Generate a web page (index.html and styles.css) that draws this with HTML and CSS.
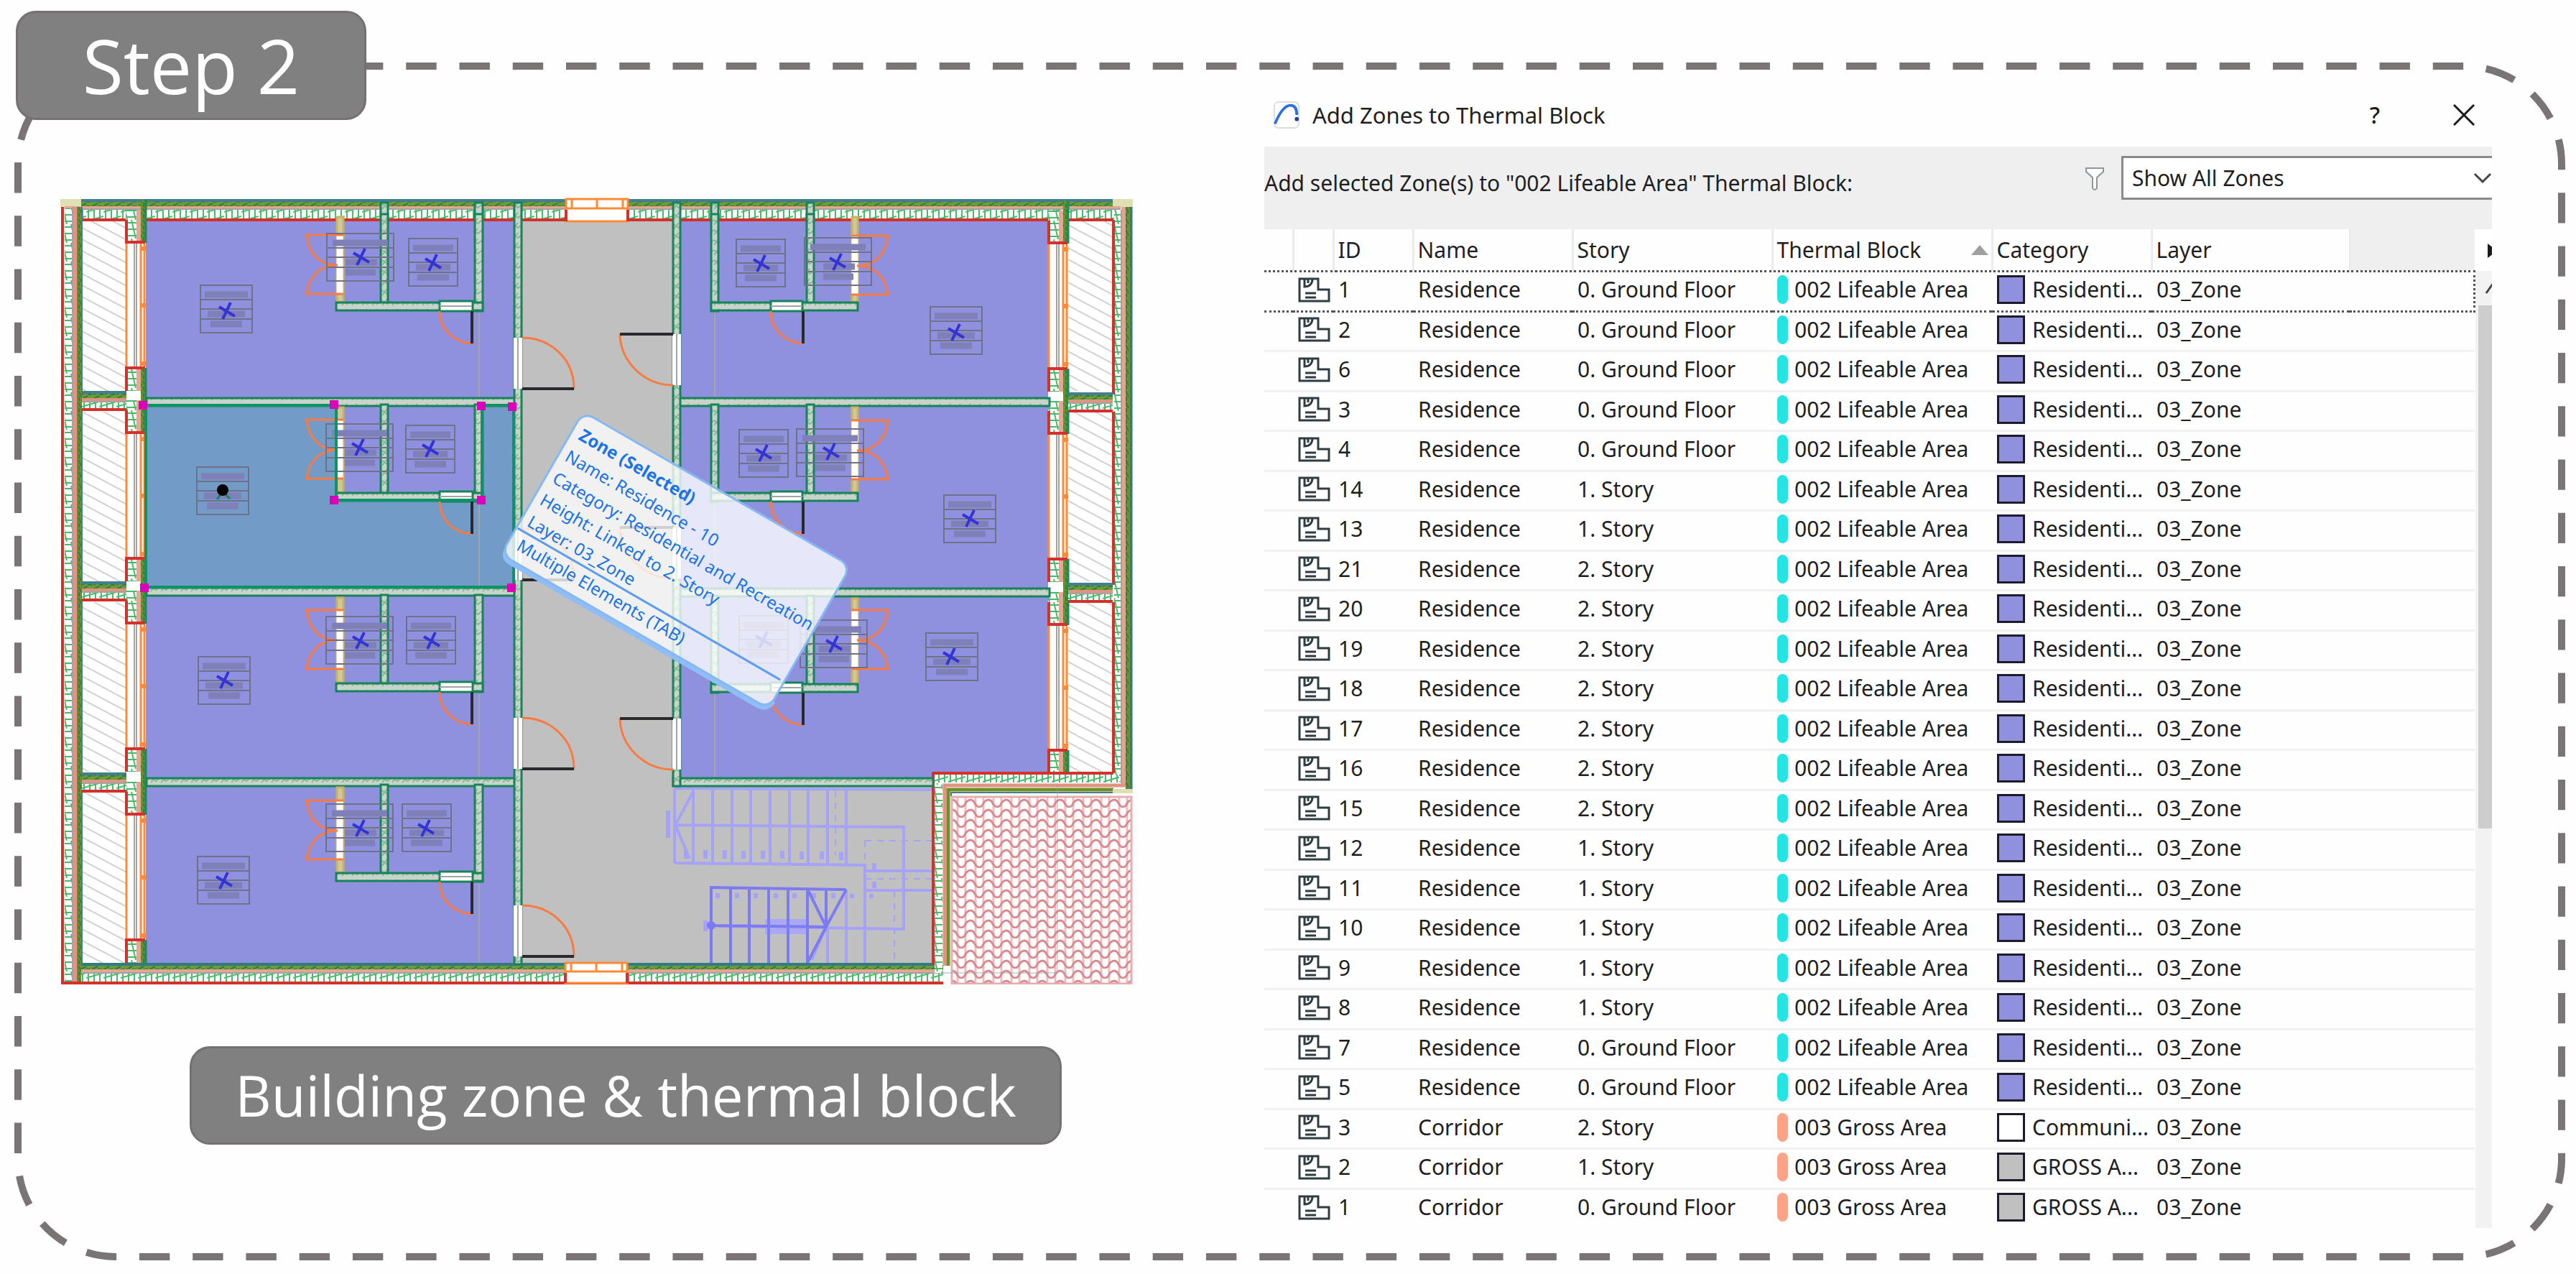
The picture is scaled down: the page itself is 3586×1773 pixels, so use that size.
FILE: index.html
```html
<!DOCTYPE html>
<html lang="en">
<head>
<meta charset="utf-8">
<title>Step 2 - Building zone &amp; thermal block</title>
<link rel="stylesheet" href="styles.css">
</head>
<body>
<svg class="sprites" aria-hidden="true">
  <symbol id="zone-icon" viewBox="0 0 45 35">
    <path d="M2 2H28V17H43V33H2Z M9 2V13C16 13 20 9 20 2 M14 3V8 M10 22H25 M10 28H25" fill="none" stroke="#2f3d42" stroke-width="3"/>
  </symbol>
</svg>
<main class="step">
  <svg class="frame" aria-hidden="true"><rect class="frame-line" rx="136" ry="136"/></svg>
  <h1 class="badge">Step 2</h1>

  <section class="plan-side">
    <svg class="plan" viewBox="84 274 1493 1096" role="img" aria-label="Floor plan with building zones">
      <defs>
        <pattern id="insH" width="24" height="13" patternUnits="userSpaceOnUse"><rect width="24" height="13" fill="#fff"/><path d="M0 9L24 2M3 0V13M11 0V13M19 0V13" stroke="#45bd68" stroke-width="2" fill="none"/></pattern>
        <pattern id="insV" width="12" height="26" patternUnits="userSpaceOnUse"><rect width="12" height="26" fill="#fff"/><path d="M3 0L9 26M0 4H12M0 13H12M0 22H12" stroke="#45bd68" stroke-width="2" fill="none"/></pattern>
        <pattern id="oliveH" width="16" height="6" patternUnits="userSpaceOnUse"><rect width="16" height="6" fill="#6f9a35"/><path d="M0 5L8 1M8 5H14" stroke="#2e7f45" stroke-width="2"/></pattern>
        <pattern id="oliveV" width="6" height="16" patternUnits="userSpaceOnUse"><rect width="6" height="16" fill="#6f8f2d"/><path d="M1 0L5 8M2 8V14" stroke="#2e7f45" stroke-width="2"/></pattern>
        <pattern id="gyp" width="14" height="14" patternUnits="userSpaceOnUse"><rect width="14" height="14" fill="#c9d3c9"/><path d="M0 4L7 9L14 4M0 11L7 2" stroke="#86b896" stroke-width="2" fill="none"/></pattern>
        <pattern id="deck" width="60" height="16" patternUnits="userSpaceOnUse"><rect width="60" height="16" fill="#fff"/><path d="M0 -16L60 16M0 0L60 32M0 -32L60 0" stroke="#d2d2d2" stroke-width="2"/></pattern>
        <pattern id="tiles" x="1326" y="1110" width="25" height="14" patternUnits="userSpaceOnUse"><rect width="25" height="14" fill="#fff"/><path d="M7 0V14M18 0V14" stroke="#eebcbf" stroke-width="3"/><path d="M-1 3Q4 3 6 8Q9 13 12 13Q16 13 18 8Q21 3 26 3" fill="none" stroke="#d98a8f" stroke-width="3"/></pattern>

        <g id="stamp"><path d="M0 0H68V66H0ZM0 20H68M0 33H68M0 47H68"/><path class="smudge" d="M6 13H62M10 40H58M12 54H56"/></g>
        <g id="stamp-main"><path d="M0 0H72V66H0ZM0 20H72M0 33H72M0 47H72"/><path class="smudge" d="M6 13H66M10 40H62M14 54H58"/></g>
        <g id="stamp-wide"><path d="M0 0H93V66H0ZM0 20H93M0 33H93M0 47H93"/><path class="smudge" d="M8 13H85M26 40H70M26 54H68"/></g>
        <path id="x" d="M-11 -6L11 7M5 -12L-6 11"/>

        <g id="opening">
          <rect x="175" y="-14" width="28" height="46" fill="url(#insV)"/>
          <rect x="190" y="-14" width="6" height="46" fill="#e8a39a"/>
          <rect x="196" y="-28" width="7" height="60" fill="url(#oliveV)"/><path class="green" d="M203 -28V32"/>
          <path class="red" d="M176 0V31H202"/>
          <rect x="175" y="33" width="28" height="172" fill="#fff"/>
          <path class="steel" d="M187 33V205M190 33V205"/>
          <path d="M176 33V205M196 33V205M201 33V205" class="amber"/><path d="M195 119H203M195 40H203M195 200H203" class="amber thick"/>
          <rect x="175" y="206" width="28" height="32" fill="url(#insV)"/>
          <rect x="190" y="206" width="6" height="32" fill="#e8a39a"/>
          <rect x="196" y="206" width="7" height="32" fill="url(#oliveV)"/><path class="green" d="M203 206V238"/>
          <path class="red" d="M176 238V206H202"/>
        </g>
        <g id="slab">
          <rect width="62" height="4" fill="#447f8c"/><rect y="4" width="62" height="6" fill="url(#oliveH)"/>
          <rect y="10" width="62" height="5" fill="#e0937f"/><rect y="15" width="62" height="10" fill="url(#insH)"/><path class="red" d="M0 26H62"/><path class="steel" d="M0 15H62"/>
        </g>
        <g id="closet-doors"><path class="swing" d="M478 0H427C429 22 442 42 470 42C442 42 429 62 427 82H478"/></g>
        <g id="bath">
          <rect class="inner" x="469" y="14" width="9" height="118" fill="#cbc9a4" stroke="#cdb25c"/>
          <rect class="inner" x="530" y="10" width="10" height="124"/>
          <rect class="inner" x="661" y="10" width="11" height="135"/>
          <rect class="inner" x="468" y="133" width="204" height="11"/>
          <rect x="612" y="131" width="46" height="14" fill="#fff"/><path class="steel" d="M612 138H657"/>
          <path class="swing" d="M612 145C612 170 632 189 657 190"/><path class="leaf" d="M657 145V190"/>
        </g>
        <g id="bath-right">
          <rect class="inner" x="1186" y="14" width="8" height="118" fill="#cbc9a4" stroke="#cdb25c"/>
          <rect class="inner" x="1123" y="10" width="10" height="124"/>
          <rect class="inner" x="990" y="10" width="10" height="135"/>
          <rect class="inner" x="990" y="133" width="204" height="11"/>
          <rect x="1073" y="131" width="44" height="14" fill="#fff"/><path class="steel" d="M1073 138H1117"/>
          <path class="swing" d="M1073 145C1073 170 1093 189 1118 190"/><path class="leaf" d="M1118 145V190"/>
        </g>
        <g id="entry-left"><rect x="715" width="12" height="71" fill="#fff"/><path class="steel" d="M721 0V71"/><path class="swing" d="M727 0C765 0 799 28 799 71"/><path class="leaf" d="M727 71H799"/></g>
        <g id="entry-right"><rect x="936" width="12" height="71" fill="#fff"/><path class="steel" d="M942 0V71"/><path class="swing" d="M863 0C863 36 895 71 937 71"/><path class="leaf" d="M863 0H937"/></g>
      </defs>

      <!-- roof -->
      <rect x="1324" y="1109" width="252" height="261" fill="url(#tiles)"/><path d="M1325 1109H1575V1369H1325Z" fill="none" stroke="#e5aeb1" stroke-width="3"/>

      <!-- zones -->
      <path d="M203 308H716V1340H203ZM948 308H1459V1083H948Z" fill="#8f91de"/>
      <path d="M726 308H937V1083H1298V1340H726Z" fill="#c0c0c0"/>
      <path d="M203 565H470V685H661V565H716V817H203Z" fill="#729bc7"/>
      <path class="steel" d="M667 308V1340M995 308V1090"/>

      <!-- stair -->
      <g class="stair-light">
        <path d="M939 1097V1201M965 1097V1202M992 1097V1202M1019 1097V1202M1045 1097V1202M1072 1097V1202M1099 1097V1202M1125 1097V1203M1152 1097V1203M1178 1097V1203M939 1097L1298 1099M939 1148L1258 1151V1293L1000 1289M939 1201L1204 1204V1340M1204 1212H1298M1204 1239H1298M1178 1238V1340M1152 1290V1340M1130 1336L1150 1290M966 1100L940 1148L960 1195"/>
        <path class="thin" d="M1163 1100V1190M1204 1170H1298M1204 1223H1298M1245 1240V1340M1204 1170V1204"/>
        <path class="ghost" d="M930 1128V1166M955 1183V1195M982 1183V1195M1009 1183V1195M1035 1184V1195M1062 1184V1195M1089 1184V1195M1116 1185V1196M1144 1185V1196M1171 1186V1197M1217 1201V1210M1217 1227V1236M982 1281V1296M999 1243V1250M1026 1243V1250M1052 1243V1250M1080 1243V1250M1106 1243V1250M1133 1243V1250M1160 1243V1250M1186 1244V1250M1213 1244V1250"/>
        <rect x="1065" y="1279" width="60" height="21" fill="#aaa8f4" stroke="none"/>
      </g>
      <path class="stair" d="M1178 1238L990 1235V1340M1017 1236V1340M1043 1236V1340M1070 1236V1340M1097 1236V1340M1124 1237V1340M990 1288L1150 1290M1124 1237L1150 1290L1178 1238M1150 1237V1290L1124 1340"/><circle class="stair" cx="990" cy="1288" r="4"/>

      <!-- outer walls -->
      <rect x="84" y="277" width="29" height="12" fill="#dedfb2"/><rect x="1549" y="277" width="28" height="12" fill="#dedfb2"/>
      <rect x="113" y="277" width="1436" height="4" fill="#447f8c"/><rect x="113" y="281" width="1436" height="6" fill="url(#oliveH)"/>
      <rect x="90" y="287" width="1470" height="5" fill="#e3a690"/><rect x="113" y="292" width="1438" height="13" fill="url(#insH)"/>
      <path class="steel" d="M113 291H1560"/><path class="red" d="M113 306H1550"/>
      <rect x="90" y="290" width="12" height="1076" fill="url(#insV)"/><path class="red" d="M87 288V1368H113"/>
      <rect x="102" y="288" width="5" height="1078" fill="#e0938b"/><path class="steel" d="M101 288V1366"/>
      <rect x="107" y="288" width="6" height="1080" fill="url(#oliveV)"/><path d="M114 288V1344" stroke="#447f8c" stroke-width="2"/>
      <rect x="1551" y="292" width="10" height="796" fill="url(#insV)"/><rect x="1561" y="288" width="6" height="806" fill="#e0a58f"/><path class="steel" d="M1561 292V1090"/>
      <rect x="1567" y="288" width="7" height="810" fill="url(#oliveV)"/><path d="M1575 288V1098" stroke="#2f7d83" stroke-width="3"/>
      <rect x="113" y="1340" width="1200" height="4" fill="#2f7d83"/><rect x="113" y="1344" width="1200" height="5" fill="url(#oliveH)"/>
      <rect x="113" y="1349" width="1200" height="5" fill="#e3a690"/><rect x="113" y="1354" width="1200" height="12" fill="url(#insH)"/><path class="steel" d="M113 1354H1313"/><path class="red" d="M87 1368H1313"/>

      <!-- balconies -->
      <g fill="url(#deck)"><rect x="115" y="308" width="60" height="236"/><rect x="115" y="573" width="60" height="236"/><rect x="115" y="838" width="60" height="236"/><rect x="115" y="1103" width="60" height="237"/><rect x="1487" y="308" width="62" height="236"/><rect x="1487" y="573" width="62" height="236"/><rect x="1487" y="838" width="62" height="238"/></g>
      <path class="red" d="M1550 306V549M1550 573V814M1550 838V1076"/>
      <use href="#opening" y="306"/><use href="#opening" y="571"/><use href="#opening" y="836"/><use href="#opening" y="1102"/>
      <use href="#opening" x="1284" y="307"/><use href="#opening" x="1284" y="572"/><use href="#opening" x="1284" y="838"/>
      <use href="#slab" x="114" y="544"/><use href="#slab" x="114" y="809"/><use href="#slab" x="114" y="1075"/>
      <use href="#slab" x="1487" y="546"/><use href="#slab" x="1487" y="811"/>

      <!-- wall beside the roof -->
      <path d="M1298 1076H1550V1103H1322V1343H1298Z" fill="#fff"/>
      <rect x="1300" y="1078" width="258" height="11" fill="url(#insH)"/><rect x="1301" y="1090" width="11" height="264" fill="url(#insV)"/>
      <path d="M1567 1093H1315V1344" fill="none" stroke="#e0937f" stroke-width="5"/><path d="M1550 1099H1320V1344" fill="none" stroke="#6f8f2d" stroke-width="5"/><path d="M1550 1103H1324V1108" fill="none" stroke="#447f8c" stroke-width="2"/>
      <rect x="1549" y="1098" width="28" height="6" fill="#dedfb2"/>
      <path class="red" d="M1299 1343V1076H1550"/>
      <path d="M1472 1090V1354H1313" fill="none" stroke="#9a9aa0" stroke-opacity=".4" stroke-width="2"/>

      <!-- party and corridor walls -->
      <g class="inner-set">
        <rect class="inner" x="204" y="554" width="513" height="11"/><rect class="inner" x="204" y="818" width="513" height="11"/><rect class="inner" x="204" y="1083" width="513" height="11"/>
        <rect class="inner" x="942" y="554" width="519" height="11"/><rect class="inner" x="942" y="819" width="519" height="11"/><rect class="inner" x="937" y="1083" width="362" height="11"/>
        <rect class="inner" x="716" y="282" width="10" height="1060"/><rect class="inner" x="937" y="282" width="10" height="812"/>
        <rect x="530" y="282" width="10" height="24"/><rect x="661" y="282" width="11" height="24"/><rect x="990" y="282" width="10" height="24"/><rect x="1123" y="282" width="10" height="24"/>
      </g>
      <g class="inner-set">
        <use href="#bath" y="288"/><use href="#bath" y="553"/><use href="#bath" y="818"/><use href="#bath" y="1082"/>
        <use href="#bath-right" y="288"/><use href="#bath-right" y="553"/><use href="#bath-right" y="819"/>
      </g>
      <path d="M473 328V408M473 585V665M473 850V930M473 1115V1195M1190 328V410M1190 585V667M1190 849V931" stroke="#fff" stroke-width="9"/>
      <use href="#closet-doors" y="327"/><use href="#closet-doors" y="584"/><use href="#closet-doors" y="849"/><use href="#closet-doors" y="1114"/>
      <g transform="matrix(-1 0 0 1 1663 0)"><use href="#closet-doors" y="328"/><use href="#closet-doors" y="585"/><use href="#closet-doors" y="849"/></g>
      <use href="#entry-left" y="470"/><use href="#entry-left" y="736"/><use href="#entry-left" y="999"/><use href="#entry-left" y="1260"/>
      <use href="#entry-right" y="465"/><use href="#entry-right" y="734"/><use href="#entry-right" y="1000"/>

      <!-- corridor windows -->
      <g class="amber"><path d="M788 277H874V308H788ZM788 290H874M831 277V290M796 277V290M867 277V290" fill="#fff"/><path d="M787 1340H873V1368H787ZM787 1352H873M830 1340V1352M795 1340V1352M866 1340V1352" fill="#fff"/></g>
      <path class="red" d="M788 292V308M874 292V308M787 1354V1368M873 1354V1368"/>

      <!-- zone stamps -->
      <g class="stamps">
        <use href="#stamp-main" x="279" y="397"/><use href="#stamp-wide" x="455" y="325"/><use href="#stamp" x="569" y="332"/>
        <use href="#stamp-main" x="274" y="650"/><use href="#stamp-wide" x="454" y="590"/><use href="#stamp" x="565" y="592"/>
        <use href="#stamp-main" x="276" y="914"/><use href="#stamp-wide" x="454" y="858"/><use href="#stamp" x="566" y="858"/>
        <use href="#stamp-main" x="275" y="1192"/><use href="#stamp-wide" x="454" y="1119"/><use href="#stamp" x="560" y="1119"/>
        <use href="#stamp" x="1025" y="333"/><use href="#stamp-wide" x="1120" y="331"/><use href="#stamp-main" x="1295" y="427"/>
        <use href="#stamp" x="1029" y="598"/><use href="#stamp-wide" x="1109" y="597"/><use href="#stamp-main" x="1314" y="689"/>
        <use href="#stamp" x="1029" y="857"/><use href="#stamp-wide" x="1114" y="863"/><use href="#stamp-main" x="1289" y="881"/>
      </g>
      <g class="marks">
        <use href="#x" x="316" y="433"/><use href="#x" x="503" y="358"/><use href="#x" x="603" y="366"/><use href="#x" x="501" y="623"/><use href="#x" x="599" y="625"/>
        <use href="#x" x="313" y="947"/><use href="#x" x="502" y="892"/><use href="#x" x="601" y="892"/><use href="#x" x="312" y="1226"/><use href="#x" x="502" y="1153"/><use href="#x" x="593" y="1153"/>
        <use href="#x" x="1060" y="367"/><use href="#x" x="1166" y="365"/><use href="#x" x="1331" y="463"/><use href="#x" x="1063" y="631"/><use href="#x" x="1157" y="629"/><use href="#x" x="1351" y="722"/>
        <use href="#x" x="1063" y="891"/><use href="#x" x="1161" y="897"/><use href="#x" x="1324" y="914"/>
      </g>
      <path d="M302 695L310 684L320 694" fill="none" stroke="#0a8a6a" stroke-width="3"/><circle cx="310" cy="682" r="8"/>

      <!-- selection outline -->
      <path d="M203 564H468V696H671V564H715V817H203Z" fill="none" stroke="#0c9468" stroke-width="4"/>
      <path d="M193 558H205V570H193ZM459 557H471V569H459ZM664 559H676V571H664ZM707 560H719V572H707ZM459 690H471V702H459ZM664 690H676V702H664ZM195 812H207V824H195ZM706 812H718V824H706Z" fill="#dc00b8"/>

      <!-- info tag -->
      <g transform="translate(812 573) rotate(30)">
        <path d="M3 221Q5 233 18 233H414Q429 233 431 217" fill="none" stroke="#8fbdf5" stroke-width="6"/>
        <rect class="tag-face" width="430" height="229" rx="16"/>
        <path d="M2 186H424" stroke="#5b9df0" stroke-width="3"/>
        <g class="tag-text">
          <text class="strong" x="12" y="37">Zone (Selected)</text>
          <text x="10" y="72">Name: Residence - 10</text>
          <text x="10" y="107">Category: Residential and Recreation</text>
          <text x="10" y="142">Height: Linked to 2. Story</text>
          <text x="10" y="177">Layer: 03_Zone</text>
          <text x="14" y="213">Multiple Elements (TAB)</text>
        </g>
      </g>
    </svg>
    <h2 class="caption">Building zone &amp; thermal block</h2>
  </section>

  <section class="dialog" aria-labelledby="dialog-title">
    <header class="titlebar">
      <svg class="app-icon" viewBox="0 0 40 40" aria-hidden="true"><rect x="2" y="1" width="36" height="38" rx="6" fill="#fff" stroke="#dcdcdc" stroke-width="2"/><path d="M3 33C10 16 17 6 26 6C33 6 35 12 35 20" fill="none" stroke="#2f6fe4" stroke-width="4"/><circle cx="35" cy="26" r="3" fill="#1d3fae"/></svg>
      <h2 class="title" id="dialog-title">Add Zones to Thermal Block</h2>
      <button class="win-btn help" type="button" aria-label="Help">?</button>
      <button class="win-btn" type="button" aria-label="Close"><svg class="close" viewBox="0 0 30 30"><path d="M1 1L29 29M29 1L1 29" stroke="#1b1b1b" stroke-width="3"/></svg></button>
    </header>
    <div class="toolbar">
      <label class="prompt" for="filter">Add selected Zone(s) to "002 Lifeable Area" Thermal Block:</label>
      <svg class="funnel" viewBox="0 0 28 34" aria-hidden="true"><path d="M2 2H26V7L17 15V30Q14 34 11 30V15L2 7Z" fill="#fff" stroke="#8d9699" stroke-width="2"/></svg>
      <div class="picker">
        <select class="filter" id="filter"><option>Show All Zones</option></select>
        <svg class="chevron" viewBox="0 0 26 16" aria-hidden="true"><path d="M2 2L13 13L24 2" fill="none" stroke="#444" stroke-width="3"/></svg>
      </div>
    </div>
    <div class="list">
      <table class="zones">
        <colgroup><col class="c-mark"><col class="c-icon"><col class="c-id"><col class="c-name"><col class="c-story"><col class="c-block"><col class="c-cat"><col class="c-layer"><col></colgroup>
        <thead><tr><th></th><th></th><th>ID</th><th>Name</th><th>Story</th><th aria-sort="ascending"><span class="sorted">Thermal Block<i class="sort-arrow"></i></span></th><th>Category</th><th>Layer</th><td class="rest"></td></tr></thead>
        <tbody>
<tr class="focused"><td></td><td><svg class="zi"><use href="#zone-icon"/></svg></td><td>1</td><td>Residence</td><td>0. Ground Floor</td><td><i class="pill"></i>002 Lifeable Area</td><td><i class="swatch"></i>Residenti...</td><td>03_Zone</td><td></td></tr>
<tr><td></td><td><svg class="zi"><use href="#zone-icon"/></svg></td><td>2</td><td>Residence</td><td>0. Ground Floor</td><td><i class="pill"></i>002 Lifeable Area</td><td><i class="swatch"></i>Residenti...</td><td>03_Zone</td><td></td></tr>
<tr><td></td><td><svg class="zi"><use href="#zone-icon"/></svg></td><td>6</td><td>Residence</td><td>0. Ground Floor</td><td><i class="pill"></i>002 Lifeable Area</td><td><i class="swatch"></i>Residenti...</td><td>03_Zone</td><td></td></tr>
<tr><td></td><td><svg class="zi"><use href="#zone-icon"/></svg></td><td>3</td><td>Residence</td><td>0. Ground Floor</td><td><i class="pill"></i>002 Lifeable Area</td><td><i class="swatch"></i>Residenti...</td><td>03_Zone</td><td></td></tr>
<tr><td></td><td><svg class="zi"><use href="#zone-icon"/></svg></td><td>4</td><td>Residence</td><td>0. Ground Floor</td><td><i class="pill"></i>002 Lifeable Area</td><td><i class="swatch"></i>Residenti...</td><td>03_Zone</td><td></td></tr>
<tr><td></td><td><svg class="zi"><use href="#zone-icon"/></svg></td><td>14</td><td>Residence</td><td>1. Story</td><td><i class="pill"></i>002 Lifeable Area</td><td><i class="swatch"></i>Residenti...</td><td>03_Zone</td><td></td></tr>
<tr><td></td><td><svg class="zi"><use href="#zone-icon"/></svg></td><td>13</td><td>Residence</td><td>1. Story</td><td><i class="pill"></i>002 Lifeable Area</td><td><i class="swatch"></i>Residenti...</td><td>03_Zone</td><td></td></tr>
<tr><td></td><td><svg class="zi"><use href="#zone-icon"/></svg></td><td>21</td><td>Residence</td><td>2. Story</td><td><i class="pill"></i>002 Lifeable Area</td><td><i class="swatch"></i>Residenti...</td><td>03_Zone</td><td></td></tr>
<tr><td></td><td><svg class="zi"><use href="#zone-icon"/></svg></td><td>20</td><td>Residence</td><td>2. Story</td><td><i class="pill"></i>002 Lifeable Area</td><td><i class="swatch"></i>Residenti...</td><td>03_Zone</td><td></td></tr>
<tr><td></td><td><svg class="zi"><use href="#zone-icon"/></svg></td><td>19</td><td>Residence</td><td>2. Story</td><td><i class="pill"></i>002 Lifeable Area</td><td><i class="swatch"></i>Residenti...</td><td>03_Zone</td><td></td></tr>
<tr><td></td><td><svg class="zi"><use href="#zone-icon"/></svg></td><td>18</td><td>Residence</td><td>2. Story</td><td><i class="pill"></i>002 Lifeable Area</td><td><i class="swatch"></i>Residenti...</td><td>03_Zone</td><td></td></tr>
<tr><td></td><td><svg class="zi"><use href="#zone-icon"/></svg></td><td>17</td><td>Residence</td><td>2. Story</td><td><i class="pill"></i>002 Lifeable Area</td><td><i class="swatch"></i>Residenti...</td><td>03_Zone</td><td></td></tr>
<tr><td></td><td><svg class="zi"><use href="#zone-icon"/></svg></td><td>16</td><td>Residence</td><td>2. Story</td><td><i class="pill"></i>002 Lifeable Area</td><td><i class="swatch"></i>Residenti...</td><td>03_Zone</td><td></td></tr>
<tr><td></td><td><svg class="zi"><use href="#zone-icon"/></svg></td><td>15</td><td>Residence</td><td>2. Story</td><td><i class="pill"></i>002 Lifeable Area</td><td><i class="swatch"></i>Residenti...</td><td>03_Zone</td><td></td></tr>
<tr><td></td><td><svg class="zi"><use href="#zone-icon"/></svg></td><td>12</td><td>Residence</td><td>1. Story</td><td><i class="pill"></i>002 Lifeable Area</td><td><i class="swatch"></i>Residenti...</td><td>03_Zone</td><td></td></tr>
<tr><td></td><td><svg class="zi"><use href="#zone-icon"/></svg></td><td>11</td><td>Residence</td><td>1. Story</td><td><i class="pill"></i>002 Lifeable Area</td><td><i class="swatch"></i>Residenti...</td><td>03_Zone</td><td></td></tr>
<tr><td></td><td><svg class="zi"><use href="#zone-icon"/></svg></td><td>10</td><td>Residence</td><td>1. Story</td><td><i class="pill"></i>002 Lifeable Area</td><td><i class="swatch"></i>Residenti...</td><td>03_Zone</td><td></td></tr>
<tr><td></td><td><svg class="zi"><use href="#zone-icon"/></svg></td><td>9</td><td>Residence</td><td>1. Story</td><td><i class="pill"></i>002 Lifeable Area</td><td><i class="swatch"></i>Residenti...</td><td>03_Zone</td><td></td></tr>
<tr><td></td><td><svg class="zi"><use href="#zone-icon"/></svg></td><td>8</td><td>Residence</td><td>1. Story</td><td><i class="pill"></i>002 Lifeable Area</td><td><i class="swatch"></i>Residenti...</td><td>03_Zone</td><td></td></tr>
<tr><td></td><td><svg class="zi"><use href="#zone-icon"/></svg></td><td>7</td><td>Residence</td><td>0. Ground Floor</td><td><i class="pill"></i>002 Lifeable Area</td><td><i class="swatch"></i>Residenti...</td><td>03_Zone</td><td></td></tr>
<tr><td></td><td><svg class="zi"><use href="#zone-icon"/></svg></td><td>5</td><td>Residence</td><td>0. Ground Floor</td><td><i class="pill"></i>002 Lifeable Area</td><td><i class="swatch"></i>Residenti...</td><td>03_Zone</td><td></td></tr>
<tr><td></td><td><svg class="zi"><use href="#zone-icon"/></svg></td><td>3</td><td>Corridor</td><td>2. Story</td><td><i class="pill gross"></i>003 Gross Area</td><td><i class="swatch common"></i>Communi...</td><td>03_Zone</td><td></td></tr>
<tr><td></td><td><svg class="zi"><use href="#zone-icon"/></svg></td><td>2</td><td>Corridor</td><td>1. Story</td><td><i class="pill gross"></i>003 Gross Area</td><td><i class="swatch grey"></i>GROSS A...</td><td>03_Zone</td><td></td></tr>
<tr><td></td><td><svg class="zi"><use href="#zone-icon"/></svg></td><td>1</td><td>Corridor</td><td>0. Ground Floor</td><td><i class="pill gross"></i>003 Gross Area</td><td><i class="swatch grey"></i>GROSS A...</td><td>03_Zone</td><td></td></tr>
        </tbody>
      </table>
      <div class="scroll" aria-hidden="true">
        <svg class="scroll-menu" viewBox="0 0 23 58"><path d="M17 20L30 30L17 40Z" fill="#1b1b1b"/></svg>
        <svg class="scroll-up" viewBox="0 0 23 48"><path d="M15 31L24 18" stroke="#444" stroke-width="3"/></svg>
        <div class="thumb"></div>
      </div>
    </div>
  </section>
</main>
</body>
</html>
```
FILE: styles.css
```css
* { box-sizing: border-box; }

body { margin: 0; background: #fefefe; color: #1f1f1f; font-family: "Noto Sans", sans-serif; }
h1, h2 { margin: 0; font-weight: 400; }
.sprites { position: absolute; width: 0; height: 0; }

.step {
  position: relative;
  min-height: 100vh;
  padding: 116px 117px 64px 84px;
  display: grid;
  grid-template-columns: 1493fr 1709fr;
  gap: 183px;
}

.frame { position: absolute; inset: 0; width: 100%; height: 100%; pointer-events: none; }
.frame-line {
  x: 25px; y: 92px;
  width: calc(100% - 45px); height: calc(100% - 116px);
  fill: none; stroke: #7a7474; stroke-width: 10px;
  stroke-dasharray: 42.4 31.85; stroke-dashoffset: -33px;
}

.badge, .caption {
  font-family: "Open Sans", sans-serif;
  color: #fff;
  background: #808080;
  border: 3px solid #767070;
  border-radius: 28px;
  text-align: center;
}
.badge { position: absolute; left: 22px; top: 15px; width: 488px; font-size: 104px; line-height: 146px; }
.caption { width: 1214px; margin: 86px 0 0 180px; font-size: 78px; line-height: 131px; }

.plan-side { padding-top: 158px; }
.plan { display: block; width: 100%; height: auto; }
.red { fill: none; stroke: #d5302c; stroke-width: 4; }
.steel { fill: none; stroke: #a3a3a3; stroke-width: 2; }
.green { stroke: #1f8a55; stroke-width: 3; }
.amber { stroke: #ff8a35; stroke-width: 3; }
.thick { stroke-width: 6; }
.swing { fill: none; stroke: #fb7a41; stroke-width: 3; }
.leaf { stroke: #2a2a2e; stroke-width: 4; }
.inner-set { fill: url(#gyp); stroke: #17835a; stroke-width: 3; }
.stamps { fill: none; stroke: #6f7188; stroke-width: 2; }
.smudge { stroke: #7f80b8; stroke-width: 9; }
.marks { fill: none; stroke: #3333d6; stroke-width: 4; }
.stair-light { fill: none; stroke: #a5a2f7; stroke-width: 4; }
.thin { stroke-width: 2; stroke-dasharray: 9 8; }
.ghost { stroke-width: 6; }
.stair { fill: none; stroke: #7d7bf2; stroke-width: 4; }
.tag-face { fill: #fff; fill-opacity: .78; stroke: #85b8f5; stroke-width: 3; }
.tag-text { font-family: "Noto Sans", sans-serif; font-size: 24px; fill: #1a73e8; }
.strong { font-weight: 700; }

.titlebar { display: flex; align-items: center; height: 88px; padding: 0 9px 0 12px; }
.app-icon { width: 38px; height: 40px; }
.title { margin: 0 auto 0 17px; font-size: 31px; line-height: 40px; }
.win-btn { width: 60px; height: 60px; padding: 0; border: 0; background: none; font: 500 32px/60px "Noto Sans", sans-serif; color: #1b1b1b; }
.help { margin-right: 64px; }
.close { display: block; width: 30px; height: 30px; margin: 0 auto; }

.toolbar { display: flex; align-items: flex-start; height: 115px; padding-top: 13px; background: #efefef; }
.prompt { margin: 18px auto 0 0; font-size: 30px; line-height: 40px; white-space: nowrap; }
.funnel { width: 28px; height: 34px; margin: 15px 23px 0 0; }
.picker { position: relative; width: 516px; }
.filter {
  display: block; width: 100%; height: 61px; padding: 0 12px;
  appearance: none; background: #fff; border: 3px solid #8a8a8a; border-right: 0; border-radius: 0;
  font: 30px "Noto Sans", sans-serif; color: inherit;
}
.chevron { position: absolute; right: 0; top: 23px; width: 26px; height: 16px; pointer-events: none; }

.list { display: grid; grid-template-columns: 1fr 23px; }
.zones { width: 100%; table-layout: fixed; border-collapse: collapse; font-size: 30px; line-height: 40px; white-space: nowrap; }
.c-mark { width: 40px; }
.c-icon { width: 56px; }
.c-id { width: 111px; }
.c-name, .c-cat { width: 222px; }
.c-story { width: 278px; }
.c-block { width: 306px; }
.c-layer { width: 276px; }
th { height: 58px; padding: 2px 0 0 5px; border-right: 3px solid #ebebeb; font-weight: 400; text-align: left; }
.rest { background: #efefef; }
.sorted { display: flex; align-items: center; justify-content: space-between; padding-right: 4px; }
.sort-arrow { border: 12px solid transparent; border-top: 0; border-bottom: 14px solid #a0a0a0; }
tbody tr { height: 55px; border-bottom: 3px solid #f1f1f1; }
tbody tr:nth-child(odd) { height: 56px; }
tbody tr:last-child { border-bottom: 0; }
tbody td { padding: 0 0 4px 7px; }
tbody .focused { border: 3px dotted #555; border-left: 0; }
.zi { display: block; width: 45px; height: 35px; }
.pill, .swatch { display: inline-block; height: 40px; vertical-align: top; }
.pill { width: 15px; margin-right: 9px; border-radius: 8px; background: #25e4e4; }
.gross { background: #fda488; }
.swatch { width: 39px; margin-right: 10px; border: 3px solid #1c1c2b; background: #8f91de; }
.common { background: #fff; }
.grey { background: #c0c0c0; }

.scroll { display: flex; flex-direction: column; background: #f2f2f2; }
.scroll-menu { width: 23px; height: 58px; background: #fff; }
.scroll-up { width: 23px; height: 48px; }
.thumb { height: 728px; margin-left: 4px; background: #cdcdcd; }
```
